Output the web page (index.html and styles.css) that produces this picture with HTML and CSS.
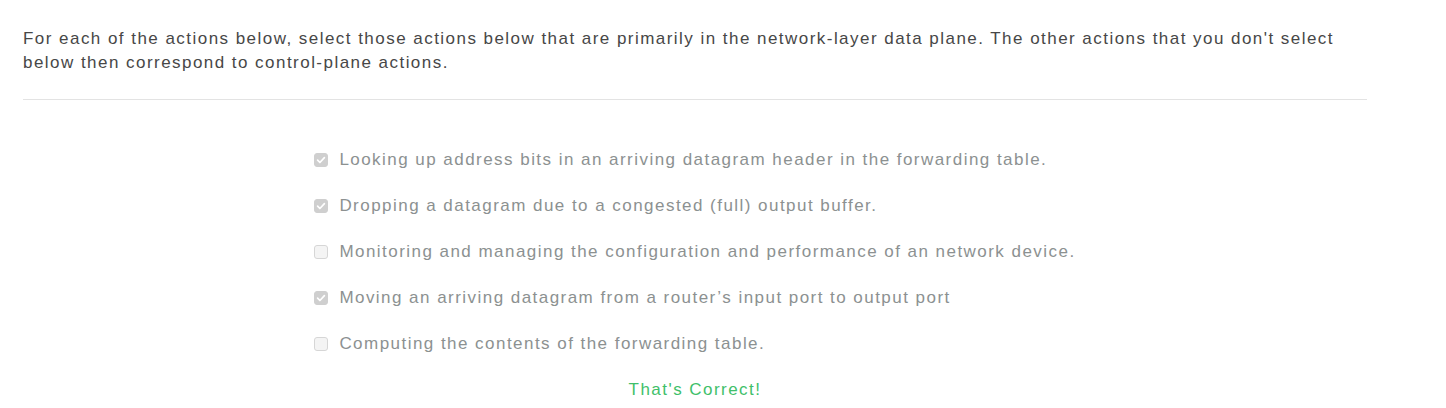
FILE: index.html
```html
<!DOCTYPE html>
<html>
<head>
<meta charset="utf-8">
<link rel="stylesheet" href="styles.css">
</head>
<body>
<div class="quiz">
  <p class="question">For each of the actions below, select those actions below that are primarily in the network-layer data plane. The other actions that you don't select below then correspond to control-plane actions.</p>
  <hr class="rule">
  <div class="answers">
    <ul class="options">
      <li class="option"><span class="box checked"><svg viewBox="0 0 14 14" width="14" height="14"><path d="M3.6 7.2 L5.9 9.5 L10.4 4.6" fill="none" stroke="#fff" stroke-width="1.7" stroke-linecap="round" stroke-linejoin="round"/></svg></span><span class="label">Looking up address bits in an arriving datagram header in the forwarding table.</span></li>
      <li class="option"><span class="box checked"><svg viewBox="0 0 14 14" width="14" height="14"><path d="M3.6 7.2 L5.9 9.5 L10.4 4.6" fill="none" stroke="#fff" stroke-width="1.7" stroke-linecap="round" stroke-linejoin="round"/></svg></span><span class="label">Dropping a datagram due to a congested (full) output buffer.</span></li>
      <li class="option"><span class="box"></span><span class="label">Monitoring and managing the configuration and performance of an network device.</span></li>
      <li class="option"><span class="box checked"><svg viewBox="0 0 14 14" width="14" height="14"><path d="M3.6 7.2 L5.9 9.5 L10.4 4.6" fill="none" stroke="#fff" stroke-width="1.7" stroke-linecap="round" stroke-linejoin="round"/></svg></span><span class="label">Moving an arriving datagram from a router’s input port to output port</span></li>
      <li class="option"><span class="box"></span><span class="label">Computing the contents of the forwarding table.</span></li>
    </ul>
  </div>
  <p class="result">That's Correct!</p>
</div>
</body>
</html>
```
FILE: styles.css
```css
html, body {
  margin: 0;
  padding: 0;
  background: #fff;
}
body {
  font-family: "Liberation Sans", Arial, sans-serif;
  font-size: 17px;
  letter-spacing: 1.46px;
}
.quiz {
  width: 1344px;
  margin-left: 23px;
  padding-top: 27px;
}
.question {
  margin: 0;
  line-height: 24px;
  color: #474747;
}
.rule {
  margin: 24px 0 0;
  border: 0;
  border-top: 1px solid #e3e3e3;
  height: 0;
}
.answers {
  text-align: center;
  padding-top: 48px;
}
.options {
  display: inline-block;
  text-align: left;
  list-style: none;
  margin: 0;
  padding: 0;
}
.option {
  display: flex;
  align-items: center;
  line-height: 24px;
  margin-bottom: 22px;
  color: #8c9191;
}
.box {
  width: 12px;
  height: 12px;
  border: 1px solid #d6d6d6;
  border-radius: 3px;
  background: #f4f4f4;
  margin-right: 11px;
  display: flex;
  align-items: center;
  justify-content: center;
  flex: none;
}
.box svg {
  flex: none;
}
.box.checked {
  background: #cfcfcf;
  border-color: #cfcfcf;
}
.result {
  margin: 0;
  text-align: center;
  line-height: 24px;
  color: #3fbf6a;
}
```
